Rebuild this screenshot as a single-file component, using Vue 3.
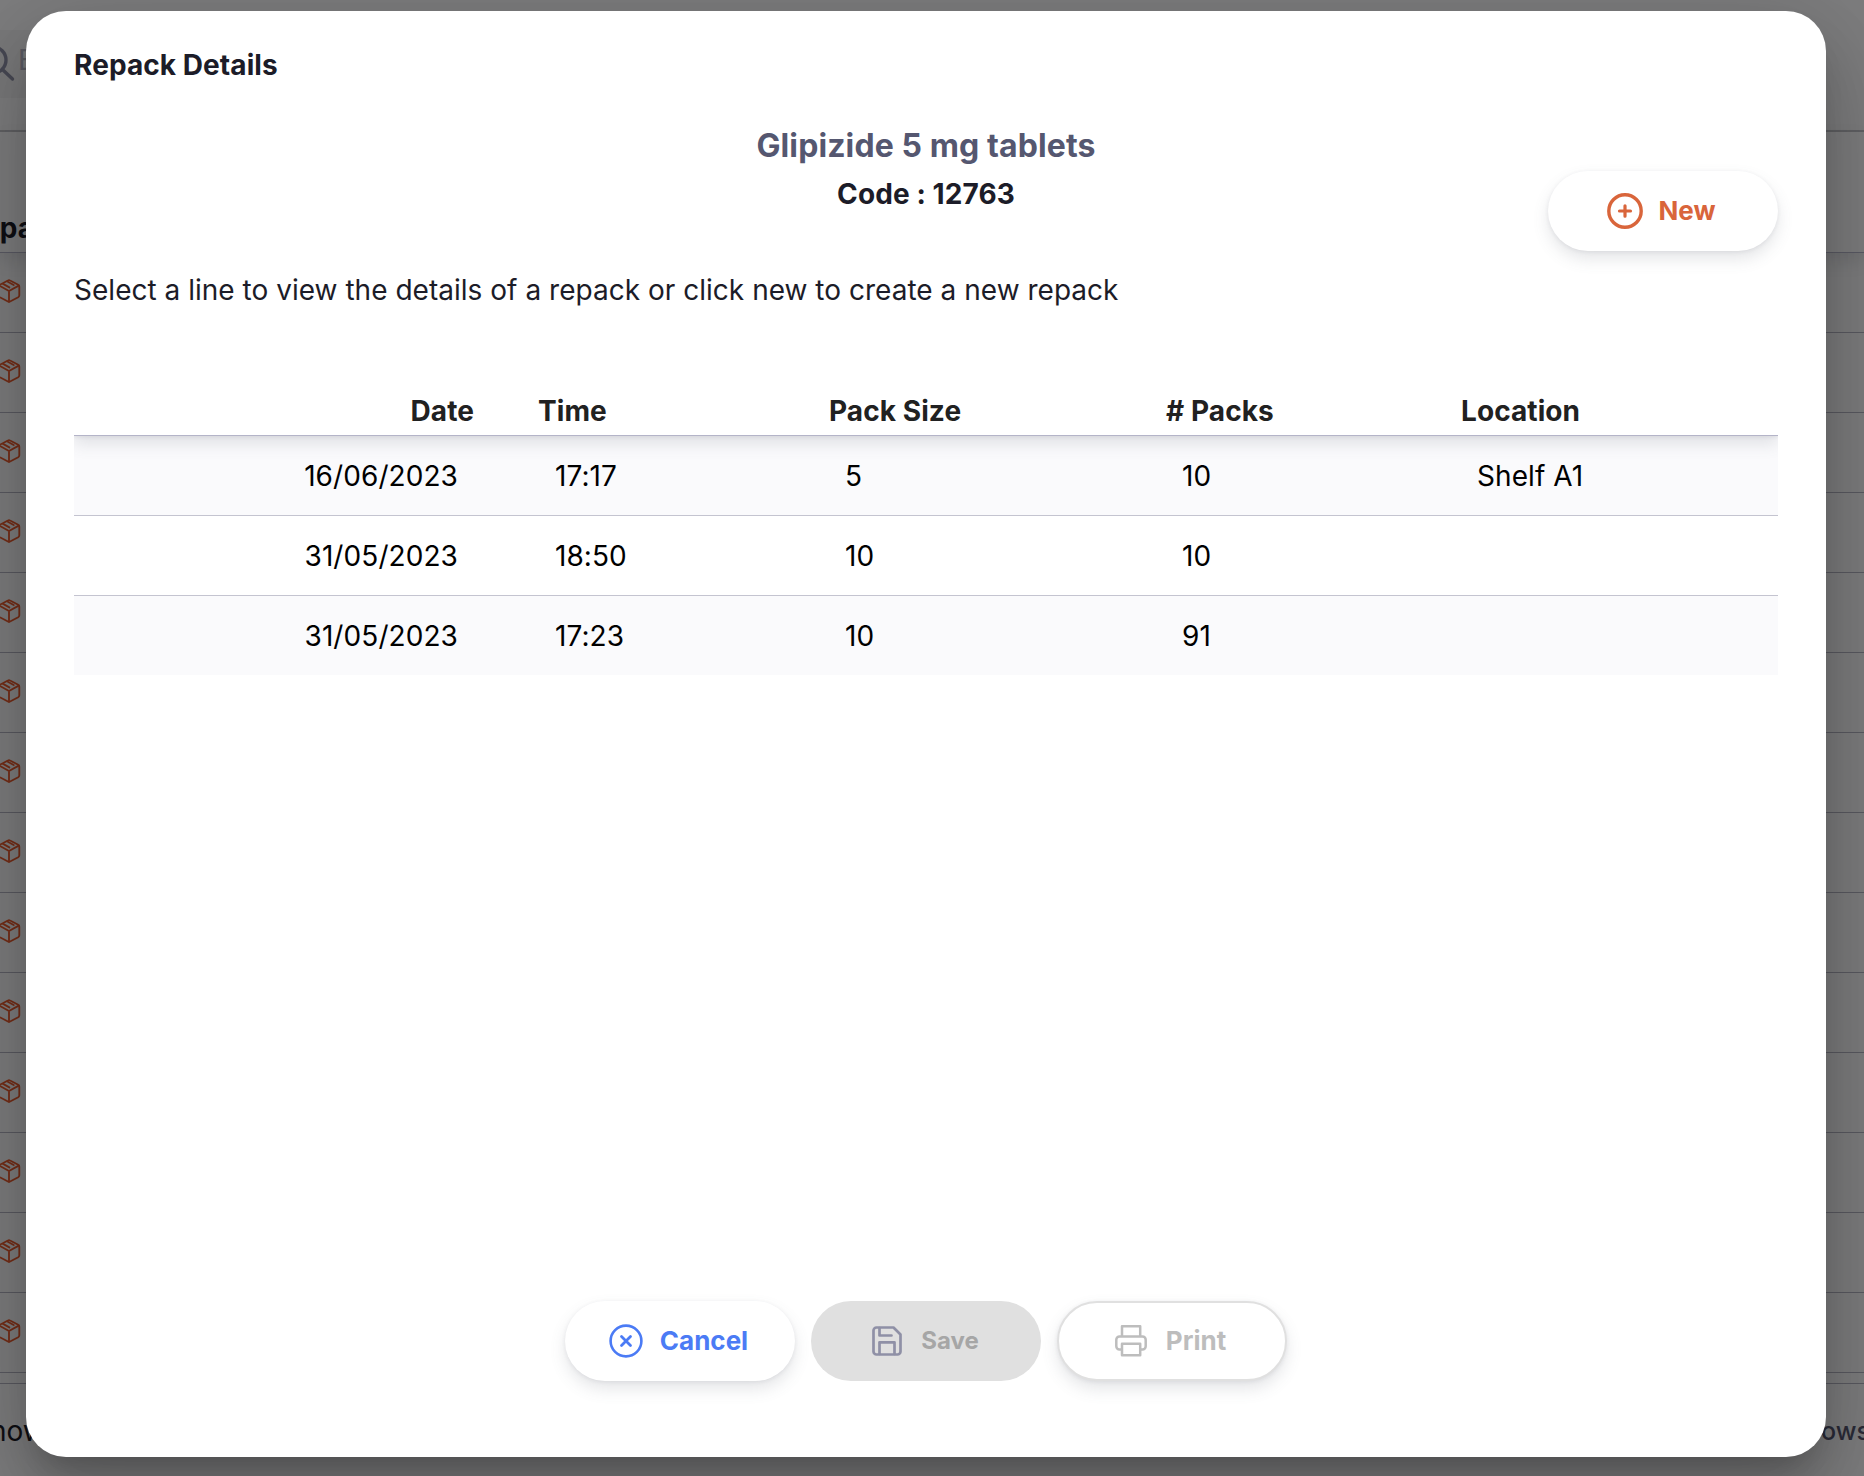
<script setup>
const columns = [
  { key: 'date', label: 'Date' },
  { key: 'time', label: 'Time' },
  { key: 'size', label: 'Pack Size' },
  { key: 'packs', label: '# Packs' },
  { key: 'location', label: 'Location' },
]
const repacks = [
  { date: '16/06/2023', time: '17:17', size: '5', packs: '10', location: 'Shelf A1' },
  { date: '31/05/2023', time: '18:50', size: '10', packs: '10', location: '' },
  { date: '31/05/2023', time: '17:23', size: '10', packs: '91', location: '' },
]
const stockRows = 14
</script>

<template>
  <div class="screen">
    <div class="page" aria-hidden="true">
      <div class="toolbar">
        <div class="search">
          <svg class="search-icon" viewBox="0 0 40 40" fill="none" stroke="#8f90a6" stroke-width="3.4" stroke-linecap="round">
            <circle cx="15" cy="16" r="13" />
            <path d="M25 26l9.500 9" />
          </svg>
          <span class="placeholder">E</span>
        </div>
      </div>
      <div class="page-head"><span>Repack</span></div>
      <div class="stock">
        <div v-for="n in stockRows" :key="n" class="stock-row">
          <svg viewBox="0 0 24 24" fill="none" stroke="#e95c30" stroke-width="1.7" stroke-linecap="round" stroke-linejoin="round">
            <path d="M21.500 16V8a2 2 0 0 0-1-1.730l-7.500-4a2 2 0 0 0-2 0l-7.500 4A2 2 0 0 0 2.500 8v8a2 2 0 0 0 1 1.730l7.500 4a2 2 0 0 0 2 0l7.500-4A2 2 0 0 0 21.500 16z" />
            <path d="M3 7L12 12l9-5M12 22V12M10.500 3.200l5.800 3.300M6.500 5.400l5.800 3.300" />
          </svg>
        </div>
      </div>
      <div class="page-foot">
        <span class="showing">Show</span>
        <span class="rows">rows</span>
      </div>
    </div>
    <div class="backdrop"></div>

    <section class="modal" role="dialog">
      <h1 class="title">Repack Details</h1>
      <div class="summary">
        <div class="item">
          <h2>Glipizide 5 mg tablets</h2>
          <p>Code : 12763</p>
        </div>
        <button class="btn new">
          <svg width="40" height="40" viewBox="0 0 40 40" fill="none" stroke="currentColor" stroke-linecap="round">
            <circle cx="20" cy="20" r="16.200" stroke-width="3.400" />
            <path d="M20 14.800v10.400M14.500 20h11" stroke-width="3.200" />
          </svg>
          <span>New</span>
        </button>
      </div>
      <p class="hint">Select a line to view the details of a repack or click new to create a new repack</p>

      <div class="table">
        <div class="row head">
          <div v-for="c in columns" :key="c.key" class="cell" :class="c.key">{{ c.label }}</div>
        </div>
        <div v-for="(r, i) in repacks" :key="i" class="row line">
          <div v-for="c in columns" :key="c.key" class="cell" :class="c.key">{{ r[c.key] }}</div>
        </div>
      </div>

      <div class="actions">
        <button class="btn cancel">
          <svg width="40" height="40" viewBox="0 0 40 40" fill="none" stroke="currentColor" stroke-linecap="round">
            <circle cx="20" cy="20" r="15.400" stroke-width="2.600" />
            <path d="M15.500 15.500l9 9M24.500 15.500l-9 9" stroke-width="2.800" />
          </svg>
          <span>Cancel</span>
        </button>
        <button class="btn save">
          <svg width="40" height="40" viewBox="0 0 40 40" fill="none" stroke="#8f90a6" stroke-width="2.700" stroke-linejoin="round" stroke-linecap="round">
            <path d="M30.500 33.500h-21a3 3 0 0 1-3-3v-21a3 3 0 0 1 3-3h17l7 7v17a3 3 0 0 1-3 3z" />
            <path d="M27.500 33V21.300h-15V33M12.500 7v7.500h12" />
          </svg>
          <span>Save</span>
        </button>
        <button class="btn print">
          <svg width="40" height="40" viewBox="0 0 40 40" fill="none" stroke="currentColor" stroke-width="2.500" stroke-linejoin="round">
            <path d="M11 15.500V5.300h18.200v10.200" />
            <path d="M11 28.500H8.500a3.200 3.200 0 0 1-3.200-3.200v-6.600a3.200 3.200 0 0 1 3.200-3.200h23a3.200 3.200 0 0 1 3.200 3.200v6.600a3.200 3.200 0 0 1-3.200 3.200h-2.300" />
            <path d="M11 22.700h18.200v11.600H11z" />
          </svg>
          <span>Print</span>
        </button>
      </div>
    </section>
  </div>
</template>

<style>
html,
body {
  margin: 0;
  overflow: hidden;
}
</style>

<style scoped>
* {
  box-sizing: border-box;
}
.screen {
  position: relative;
  width: 1864px;
  height: 1476px;
  overflow: hidden;
  background: #fafafc;
  font-family: Inter, "Liberation Sans", sans-serif;
  color: #1c1c28;
}
h1,
h2,
p {
  margin: 0;
}
.page {
  display: flex;
  flex-direction: column;
  height: 1476px;
}
.toolbar {
  height: 132px;
  padding-top: 30px;
  border-bottom: 2px solid #c4c4ca;
}
.search {
  display: flex;
  align-items: center;
  width: 500px;
  height: 68px;
  background: #f2f2f5;
}
.search-icon {
  width: 40px;
  height: 40px;
  margin-left: -22px;
}
.placeholder {
  font-size: 28px;
  line-height: 34px;
  color: #b4b4c4;
  margin: -8px 0 0;
}
.page-head {
  display: flex;
  align-items: flex-end;
  height: 121px;
  padding-bottom: 4px;
  border-bottom: 1px solid #b4b4c8;
  box-shadow: 0 8px 16px rgba(96, 97, 112, 0.16);
  font-size: 28px;
  font-weight: 700;
  line-height: 40px;
}
.page-head span {
  margin-left: -35px;
}
.stock-row {
  display: flex;
  align-items: center;
  height: 80px;
  border-bottom: 1px solid #b4b4c2;
}
.stock-row svg {
  width: 26px;
  height: 26px;
  margin: -3px 0 0 -4px;
}
.page-foot {
  display: flex;
  justify-content: space-between;
  height: 93px;
  margin-top: 10px;
  padding-top: 30px;
  border-top: 1px solid #b4b4c2;
  font-size: 28px;
  line-height: 34px;
}
.showing {
  margin-left: -28px;
}
.rows {
  font-size: 25px;
  font-weight: 500;
  color: #555770;
  margin-right: -6px;
}
.backdrop {
  position: absolute;
  inset: 0;
  background: rgba(0, 0, 0, 0.5);
}
.modal {
  position: absolute;
  left: 26px;
  top: 11px;
  display: flex;
  flex-direction: column;
  width: 1800px;
  height: 1446px;
  padding: 0 48px;
  border-radius: 40px;
  background: #fff;
  box-shadow:
    0 22px 30px -14px rgba(0, 0, 0, 0.2),
    0 48px 76px 6px rgba(0, 0, 0, 0.14),
    0 18px 92px 16px rgba(0, 0, 0, 0.12);
}
.title {
  margin-top: 32px;
  font-size: 28px;
  font-weight: 700;
  line-height: 44px;
  letter-spacing: 0.08px;
}
.summary {
  display: grid;
  grid-template-columns: 230px 1fr 230px;
  margin-top: 34px;
  height: 130px;
}
.item {
  grid-column: 2;
  padding-top: 1px;
  text-align: center;
  letter-spacing: 0.1px;
}
.item h2 {
  font-size: 32px;
  font-weight: 700;
  line-height: 48px;
  color: #555770;
}
.item p {
  font-size: 28px;
  font-weight: 700;
  line-height: 48px;
}
.new {
  margin-top: 50px;
}
.hint {
  margin-top: 17px;
  font-size: 28px;
  line-height: 44px;
  letter-spacing: 0.02px;
}
.table {
  margin-top: 81px;
}
.row {
  display: grid;
  grid-template-columns: 449px 290px 337px 295px 333px;
  align-items: center;
  height: 80px;
  font-size: 28px;
  line-height: 40px;
  letter-spacing: 0.08px;
  color: #000;
}
.cell {
  padding-left: 32px;
}
.cell.date {
  padding: 0 65px 0 0;
  text-align: right;
}
.head {
  position: relative;
  height: 43px;
  padding-bottom: 6px;
  border-bottom: 1px solid #b4b4c8;
  font-weight: 700;
  line-height: 34px;
  color: #212121;
  box-shadow:
    0 1px 4px rgba(40, 41, 61, 0.08),
    0 8px 16px rgba(96, 97, 112, 0.16);
  clip-path: inset(0 0 -30px 0);
}
.head .cell {
  padding-left: 16px;
}
.head .time {
  padding-left: 15px;
}
.head .date {
  padding: 0 49px 0 0;
}
.line {
  border-bottom: 1px solid #c4c4d0;
}
.line:nth-child(even) {
  background: #fafafc;
}
.line:last-child {
  height: 79px;
  border-bottom: 0;
}
.actions {
  display: flex;
  justify-content: center;
  gap: 16px;
  margin-top: auto;
  margin-bottom: 76px;
}
.btn {
  display: flex;
  align-items: center;
  justify-content: center;
  gap: 13px;
  width: 230px;
  height: 80px;
  padding: 0 5px 0 0;
  border: 0;
  border-radius: 40px;
  background: #fff;
  font: 700 26px/40px Inter, "Liberation Sans", sans-serif;
  box-shadow:
    0 1px 4px rgba(40, 41, 61, 0.08),
    0 8px 16px rgba(96, 97, 112, 0.16);
}
.new {
  color: #d9653b;
}
.cancel {
  gap: 14px;
  padding-right: 6px;
  color: #4b7bf5;
}
.save {
  gap: 14px;
  padding-right: 6px;
  background: #e0e0e0;
  color: #a6a6a6;
  box-shadow: none;
}
.save span {
  font-size: 24px;
}
.print {
  gap: 14.5px;
  padding-right: 6.5px;
  border: 2px solid #e0e0e0;
  color: #bdbdbd;
}
</style>
